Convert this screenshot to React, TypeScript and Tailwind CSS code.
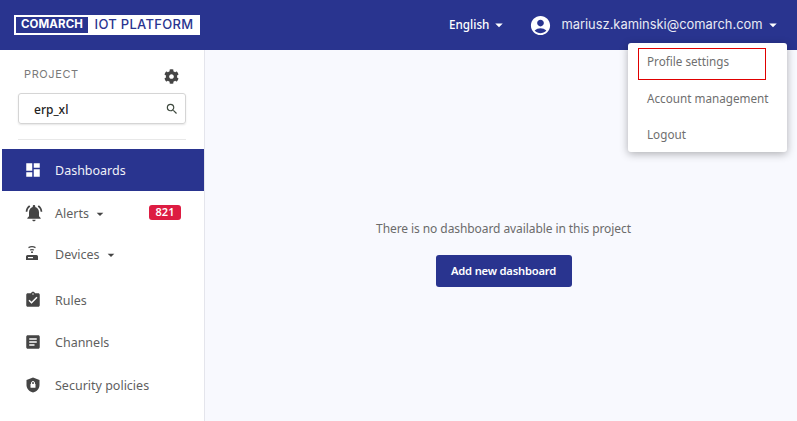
import React from 'react';
import { FaCog } from 'react-icons/fa';
import {
  MdAccountCircle,
  MdArrowDropDown,
  MdArticle,
  MdAssignmentTurnedIn,
  MdDashboard,
  MdNotificationsActive,
  MdSearch,
} from 'react-icons/md';

const plex = "font-['Noto_Sans',sans-serif]";

function DeviceIcon() {
  return (
    <svg viewBox="0 0 16 16" className="w-4 h-4" fill="none">
      <path d="M4.5 1.6c2-1 5-1 7 0M6 4c1.3-.6 2.700-.6 4 0" stroke="#454545" strokeWidth="1.200" />
      <rect x="7" y="5.500" width="2" height="1.400" fill="#454545" />
      <path d="M2 10.500a1.500 1.500 0 0 1 1.500-1.500h9a1.500 1.500 0 0 1 1.500 1.500V14H2z" fill="#454545" />
      <rect x="4" y="11" width="5" height="1.200" fill="#fff" />
    </svg>
  );
}

function ShieldIcon() {
  return (
    <svg viewBox="0 0 14 16" className="w-[14px] h-4 ml-[2px]">
      <path d="M7 0.500L13.500 3v5c0 3.600-2.700 6.600-6.500 7.500C3.200 14.600.5 11.600.5 8V3z" fill="#454545" />
      <rect x="4.500" y="6.800" width="5" height="4" rx="0.600" fill="#fff" />
      <path d="M5.500 7V6a1.500 1.500 0 0 1 3 0v1" stroke="#fff" fill="none" />
    </svg>
  );
}

const navItems = [
  { label: 'Dashboards', icon: <MdDashboard size={18} />, gap: '', active: true },
  { label: 'Alerts', icon: <MdNotificationsActive size={20} />, gap: 'mt-px', caret: true, badge: '821' },
  { label: 'Devices', icon: <DeviceIcon />, gap: '-mt-px', caret: true },
  { label: 'Rules', icon: <MdAssignmentTurnedIn size={18} />, gap: 'mt-[4px]' },
  { label: 'Channels', icon: <MdArticle size={18} />, gap: '' },
  { label: 'Security policies', icon: <ShieldIcon />, gap: 'mt-px' },
];

export default function App() {
  return (
    <div className={`${plex} relative w-[797px] h-[421px] overflow-hidden flex flex-col bg-[#f8f9fe]`}>
      <header className="h-[50px] shrink-0 bg-[#29348f] flex items-center text-white">
        <div className="ml-[14px] w-[186px] h-[20px] flex bg-white border border-white items-stretch">
          <div className="w-[74px] bg-[#29348f] border border-white flex items-center justify-center text-[11.500px] font-bold font-['Inter',sans-serif] tracking-[0.1px]">
            COMARCH
          </div>
          <div className="flex-1 text-[#29348f] flex items-center justify-center text-[13px] font-medium font-['Inter',sans-serif] tracking-[0.3px]">
            IOT PLATFORM
          </div>
        </div>
        <div className="ml-[249px] flex items-center text-[11.700px] font-medium">
          English
          <MdArrowDropDown size={18} className="ml-[1px]" />
        </div>
        <MdAccountCircle size={23} className="ml-[21px]" />
        <div className="ml-[9px] text-[12.900px] font-['Inter',sans-serif] text-[#e8e9f4]">
          mariusz.kaminski@comarch.com
        </div>
        <MdArrowDropDown size={18} className="ml-[1px]" />
      </header>

      <div className="flex-1 flex min-h-0">
        <aside className="w-[205px] shrink-0 bg-white border-r border-[#e4e5ec] pl-[2px]">
          <div className="pl-[16px] pr-[18px]">
            <div className="h-[48px] flex items-center justify-between pl-[6px] pr-[7px]">
              <span className="text-[11px] tracking-[0.6px] text-[#7a7a7a] font-['Inter',sans-serif] mt-[1px]">PROJECT</span>
              <FaCog size={15} className="text-[#454545] mt-[4px]" />
            </div>
            <div className="h-[31px] border border-[#d5d5d5] rounded-[3px] shadow-[0_1px_2px_rgba(0,0,0,0.1)] flex items-center justify-between pl-[15px] pr-[6px] -mt-[5px] text-[12px] font-medium text-[#222]">
              <span className="mt-[2px]">erp_xl</span>
              <MdSearch size={14} className="text-[#3f4a3f]" />
            </div>
            <div className="h-px bg-[#e8e8e8] mt-[15px]" />
          </div>
          <nav className="mt-[9px]">
            {navItems.map((item) => (
              <div
                key={item.label}
                className={`${item.gap} h-[42px] pt-[2px] flex items-center pl-[22px] pr-[23px] text-[12.500px] ${
                  item.active ? 'bg-[#29348f] text-[#f0f1f8]' : 'text-[#5f5f5f]'
                }`}
              >
                <span className={`w-[31px] -mt-[2px] flex items-center ${item.active ? 'text-white' : 'text-[#454545]'}`}>
                  {item.icon}
                </span>
                {item.label}
                {item.caret && <MdArrowDropDown size={16} className="ml-[3px] text-[#454545]" />}
                {item.badge && (
                  <span className="ml-auto -mt-[3px] w-[32px] h-[15px] rounded-[3px] bg-[#dd1c42] text-white text-[11px] font-semibold flex items-center justify-center">
                    {item.badge}
                  </span>
                )}
              </div>
            ))}
          </nav>
        </aside>

        <main className="flex-1 flex flex-col items-center pt-[170px] pl-[5px]">
          <p className="text-[12px] text-[#6b6b6b] tracking-[-0.08px]">There is no dashboard available in this project</p>
          <button className="mt-[17px] w-[136px] h-[32px] rounded-[3px] bg-[#29348f] text-white text-[11.200px] font-semibold tracking-[-0.2px]">
            Add new dashboard
          </button>
        </main>
      </div>

      <div className="absolute left-[628px] top-[43px] w-[159px] h-[109px] bg-white rounded-[3px] shadow-[0_2px_8px_rgba(0,0,0,0.3)] text-[11.700px] text-[#6f6f6f]">
        <div className="absolute left-[10px] top-[5px] w-[128px] h-[32px] border border-[#e00000]" />
        <div className="h-[36px] pt-[2px] pl-[19px] flex items-center">Profile settings</div>
        <div className="h-[37px] pt-[2px] pl-[19px] flex items-center">Account management</div>
        <div className="h-[36px] pt-[2px] pl-[19px] flex items-center">Logout</div>
      </div>
    </div>
  );
}
